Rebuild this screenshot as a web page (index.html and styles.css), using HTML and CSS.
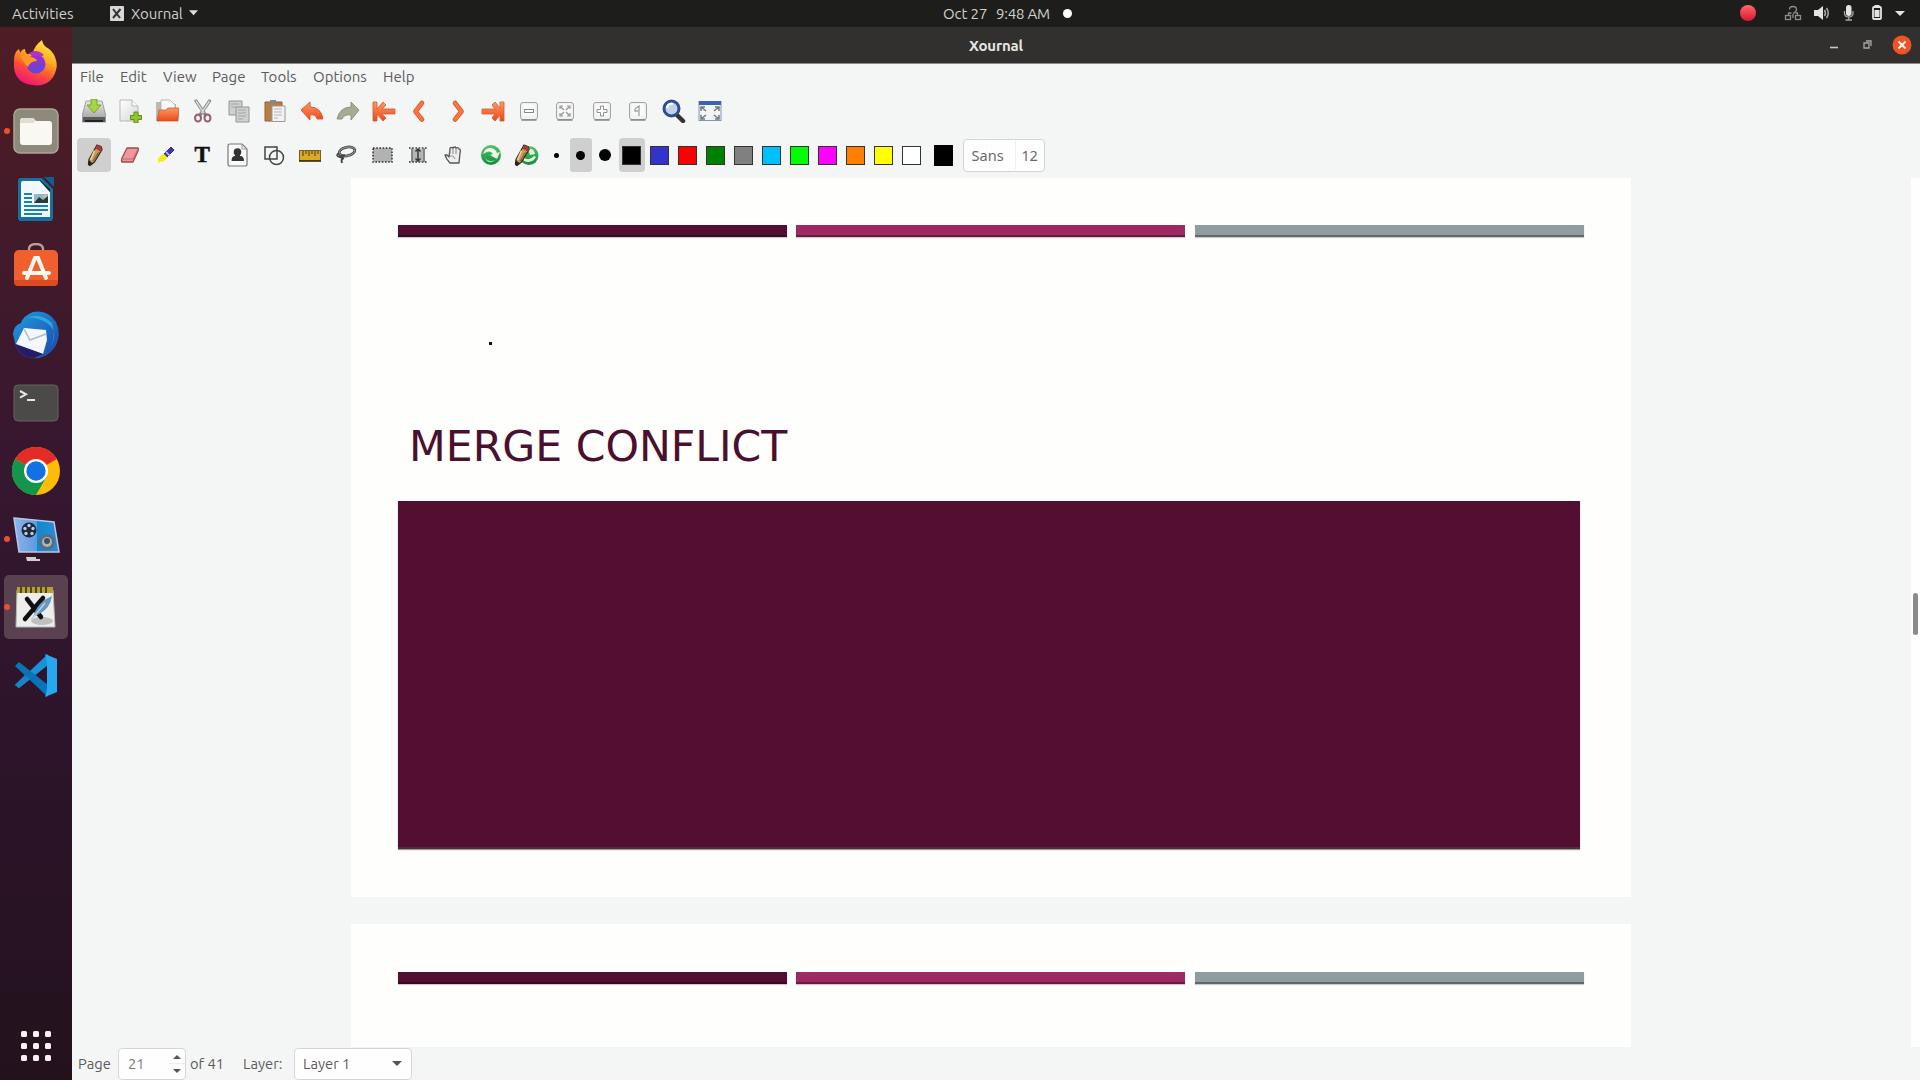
FILE: index.html
```html
<!DOCTYPE html>
<html lang="en">
<head>
<meta charset="utf-8">
<title>Xournal</title>
<link rel="stylesheet" href="styles.css">
</head>
<body>
<svg class="defs" width="0" height="0">
  <defs>
    <linearGradient id="orange" x1="0" y1="0" x2="0" y2="1"><stop offset="0" stop-color="#fb9a62"/><stop offset="1" stop-color="#ec4a1c"/></linearGradient>
    <linearGradient id="metal" x1="0" y1="0" x2="0" y2="1"><stop offset="0" stop-color="#e6e6e6"/><stop offset="1" stop-color="#9b9b9b"/></linearGradient>
    <linearGradient id="paper" x1="0" y1="0" x2="1" y2="1"><stop offset="0" stop-color="#ffffff"/><stop offset="1" stop-color="#d6d6d6"/></linearGradient>
    <linearGradient id="fox" x1=".8" y1="0" x2=".35" y2="1"><stop offset="0" stop-color="#fff04a"/><stop offset=".4" stop-color="#ffa91f"/><stop offset=".7" stop-color="#ff4b38"/><stop offset="1" stop-color="#ee1578"/></linearGradient>
    <linearGradient id="foxcore" x1="0" y1="0" x2="0" y2="1"><stop offset="0" stop-color="#a12bd6"/><stop offset="1" stop-color="#5b4ad8"/></linearGradient>
    <linearGradient id="bird" x1="0" y1="0" x2="1" y2="1"><stop offset="0" stop-color="#1f9de0"/><stop offset="1" stop-color="#1c46a8"/></linearGradient>
    <linearGradient id="screen" x1="0" y1="0" x2="1" y2="0"><stop offset="0" stop-color="#8fb4e8"/><stop offset=".5" stop-color="#5e9ae0"/><stop offset=".52" stop-color="#1287cf"/><stop offset="1" stop-color="#2a8fd6"/></linearGradient>
    <linearGradient id="recycle" x1="0" y1="0" x2="0" y2="1"><stop offset="0" stop-color="#58c46a"/><stop offset="1" stop-color="#0c8d3a"/></linearGradient>
    <g id="pencil">
      <path d="M15 2l4 1.500 1 3-7.500 12.500-4.500 3.500-1.500-1 .5-5z" fill="#c79a5b" stroke="#34261b" stroke-width="1.300" stroke-linejoin="round"/>
      <path d="M15 2l4 1.500 1 3-1.500 2.300-5.200-3.600z" fill="#a83b35"/>
      <path d="M12.500 7.500L8.500 17" stroke="#f0d29c" stroke-width="1.700"/>
      <path d="M16.500 9.500L11 18" stroke="#8a5d31" stroke-width="1.200"/>
      <path d="M7 17.500l3.500 2.500-3 2.500-1.300-.8z" fill="#222"/>
    </g>
    <g id="key">
      <rect x="3.500" y="3.500" width="17" height="17" rx="2.500" fill="#f2f2f2" stroke="#a2a2a2"/>
      <path d="M4.500 21h15" stroke="#858585" stroke-width="1.500"/>
      <rect x="6" y="5" width="12" height="11.500" rx="2" fill="#fafafa"/>
    </g>
  </defs>
</svg>

<header class="topbar">
  <div class="top-left">
    <span class="activities">Activities</span>
    <svg class="app-mark" viewBox="0 0 14 15"><rect width="14" height="15" rx="1" fill="#d8d8d8"/><path d="M3 3l7 9M10.500 3L3 12" stroke="#333" stroke-width="2"/></svg>
    <span class="app-name">Xournal</span>
    <svg class="tri" viewBox="0 0 10 6"><path d="M0 0h10L5 5.500z" fill="#dedede"/></svg>
  </div>
  <div class="clock"><span class="date">Oct 27</span><span class="time">9:48 AM</span><i class="notify"></i></div>
  <div class="tray">
    <svg width="172" height="27" viewBox="0 0 172 27">
      <defs><linearGradient id="rec" x1="0" y1="0" x2="0" y2="1"><stop offset="0" stop-color="#ff6b68"/><stop offset="1" stop-color="#d91534"/></linearGradient></defs>
      <circle cx="8" cy="13" r="8" fill="url(#rec)"/>
      <g fill="none" stroke="#8d8d8b" stroke-width="1.300"><path d="M49.500 9.500q0-3 3.500-3t3.500 3q0 2-3.500 4M53 14v4M48.500 15v-2h3M57.500 15v-2h-2"/><rect x="45.500" y="15.500" width="5" height="4"/><rect x="55.500" y="15.500" width="5" height="4"/></g>
      <path d="M74 10h4l5-4v14l-5-4h-4z" fill="#e4e4e2"/><path d="M84.500 10q2 3 0 6M86.500 8q3.500 5 0 10" fill="none" stroke="#b0b0ae" stroke-width="1.400"/>
      <rect x="106" y="5" width="5.500" height="11" rx="2.700" fill="#e4e4e2"/><path d="M104.500 11v2q0 4 4.200 4t4.300-4v-2M108.700 17v3M105.500 20h6.500" fill="none" stroke="#a5a5a3" stroke-width="1.300"/>
      <rect x="133" y="7" width="8" height="12" rx="1" fill="none" stroke="#e4e4e2" stroke-width="1.800"/><path d="M134.500 5h5v2h-5zM134.500 10h5v7h-5z" fill="#e4e4e2"/>
      <path d="M155 11h10l-5 5z" fill="#e4e4e2"/>
    </svg>
  </div>
</header>

<div class="desktop">
  <nav class="dock">
    <div class="launcher"><svg viewBox="0 0 48 48"><path d="M2 21q0-8 5-11 1 2 1 4 2-4 5-4 0 3 2 5 4 0 6-1 1-7 9-13 1 5 4 7 6 3 9 10 3 8 1 13-4 15-19 15.500Q4 46 2 29z" fill="url(#fox)"/><circle cx="24" cy="25" r="9.500" fill="url(#foxcore)"/><path d="M9 17q6-2 13 2 3 1 3 3-7 0-9 6-6-6-7-11z" fill="#ff9922"/><path d="M17 14q8-5 15 2l-4 2q-3-3-8-1z" fill="#b232c8"/></svg></div>
    <div class="launcher running"><svg viewBox="0 0 48 48"><rect x="2" y="2" width="44" height="44" rx="6" fill="#8e8a7b" stroke="#aaa596" stroke-width="1.500"/><path d="M8 14q0-3 3-3h10l3 3h13q3 0 3 3v18q0 3-3 3H11q-3 0-3-3z" fill="#faf8f3"/><path d="M8 16v-2q0-3 3-3h10l3 3-3 2z" fill="#e2ddd1"/></svg></div>
    <div class="launcher"><svg viewBox="0 0 48 48"><path d="M9 3h21l11 11v29q0 3-3 3H9q-3 0-3-3V6q0-3 3-3z" fill="#16719f"/><path d="M32 2h10v10z" fill="#0c6191"/><path d="M11 6h17l10 11v25H9V8q0-2 2-2z" fill="#f2f9fc"/><path d="M28 5v1l10 11V14z" fill="#122c42"/><g stroke="#1783b0" stroke-width="1.800"><path d="M12 19h8M12 23h8M12 27h8M12 31h24M12 35h24M12 39h18"/></g><rect x="22" y="19" width="14" height="9" fill="#8fb8ce"/><path d="M22 28l5-6 4 3 5-4v7z" fill="#283a35"/><circle cx="33" cy="21" r="1.500" fill="#edc14f"/></svg></div>
    <div class="launcher"><svg viewBox="0 0 48 48"><path d="M17 9V6q0-5 7-5t7 5v3" fill="none" stroke="#bba194" stroke-width="2.300"/><rect x="2" y="7" width="44" height="36" rx="5" fill="#f0602f"/><path d="M2 37h44v2q0 4-4 4H6q-4 0-4-4z" fill="#dc4b22"/><path d="M15 35L23 15h3l8 20M12 30h25" fill="none" stroke="#fff6ed" stroke-width="4" stroke-linecap="round"/></svg></div>
    <div class="launcher"><svg viewBox="0 0 48 48"><path d="M21 1q15-3 23 10 6 13-1 25-9 13-24 11Q5 44 3 32L1 23q1-9 8-11 2-7 12-11z" fill="url(#bird)"/><path d="M15 7q14-6 25 5 5 16-4 27 13-17-1-27-9-6-20-5z" fill="#3abbe8" opacity=".7"/><path d="M4 33l8-16 22 2 1 10-4 14z" fill="#f4f7fb"/><path d="M12 18l6 11 16-6" fill="none" stroke="#acbac9" stroke-width="1.500"/><path d="M3 33l28 10-9 4Q7 46 3 33z" fill="#271b65"/></svg></div>
    <div class="launcher"><svg viewBox="0 0 48 48"><rect x="2" y="6" width="44" height="36" rx="4" fill="#4b4a49" stroke="#656361"/><path d="M8 12l6 3.300-6 3.300M15 21h8" fill="none" stroke="#e6e6e6" stroke-width="2"/></svg></div>
    <div class="launcher"><svg viewBox="0 0 48 48"><circle cx="24" cy="24" r="24" fill="#fbbd07"/><path d="M24 24L3.200 12A24 24 0 0 1 44.800 12z" fill="#e32b27"/><path d="M3.200 12A24 24 0 0 0 24 48l10.400-18L24 24z" fill="#13954b"/><path d="M24 12h20.800L40 12H24z" fill="#e32b27"/><circle cx="24" cy="24" r="12" fill="#fff"/><circle cx="24" cy="24" r="9.700" fill="#1272e3"/></svg></div>
    <div class="launcher running"><svg viewBox="0 0 48 48"><path d="M2 3l40 4 5 30-40 0z" fill="url(#screen)" stroke="#b9c7e4" stroke-width="1.500"/><circle cx="17" cy="15" r="7.500" fill="#1d2938"/><g fill="#b9cde2"><circle cx="17" cy="10.500" r="1.700"/><circle cx="21" cy="13.500" r="1.700"/><circle cx="20" cy="18.500" r="1.700"/><circle cx="14" cy="18.500" r="1.700"/><circle cx="13" cy="13.500" r="1.700"/></g><circle cx="35" cy="27" r="8" fill="#5b6c7c"/><circle cx="35" cy="27" r="5" fill="#a7b7c1"/><circle cx="35" cy="26" r="3" fill="#415161"/><path d="M14 42h10v2h4v2H15z" fill="#ced0d2"/></svg></div>
    <div class="launcher running selected"><svg viewBox="0 0 48 48"><path d="M5 7h36l2 37H4z" fill="#edeeec" stroke="#b7b6b1"/><ellipse cx="30" cy="38" rx="11" ry="4" fill="#bfbfbe"/><path d="M5 4h36v6H5z" fill="#b6a02e"/><path d="M9 3v7M14 3v7M19 3v7M24 3v7M29 3v7M34 3v7" stroke="#4c4624" stroke-width="2"/><path d="M15 16l14 18M31 15L13 36" stroke="#101112" stroke-width="4.500" stroke-linecap="round"/><path d="M21 34q4-15 19-21-2 13-13 18z" fill="#6998bd"/><path d="M19 37l14-17" stroke="#bad2e6" stroke-width="1.500"/></svg></div>
    <div class="launcher"><svg viewBox="0 0 48 48"><path d="M3 34l4 3 29-23V3z" fill="#1b91d8"/><path d="M3 15l4-4 29 23v12z" fill="#0874b8"/><path d="M33 3l12 5v33l-12 5 2-8V12z" fill="#25a8f1"/><path d="M3 34l4 3 11-9-5-4z" fill="#1686cb"/></svg></div>
    <svg class="apps" viewBox="0 0 30 30" fill="#fbf0f5"><rect x="0" y="0" width="6" height="6" rx="1.500"/><rect x="12" y="0" width="6" height="6" rx="1.500"/><rect x="24" y="0" width="6" height="6" rx="1.500"/><rect x="0" y="12" width="6" height="6" rx="1.500"/><rect x="12" y="12" width="6" height="6" rx="1.500"/><rect x="24" y="12" width="6" height="6" rx="1.500"/><rect x="0" y="24" width="6" height="6" rx="1.500"/><rect x="12" y="24" width="6" height="6" rx="1.500"/><rect x="24" y="24" width="6" height="6" rx="1.500"/></svg>
  </nav>

  <main class="window">
    <div class="titlebar">
      <span class="title">Xournal</span>
      <svg class="controls" width="94" height="36" viewBox="0 0 94 36"><path d="M4 20.500h8" stroke="#c9c8c5" stroke-width="1.600"/><path d="M38 16h5v5h-5zM40 14h5v5" fill="none" stroke="#aaa9a6" stroke-width="1.300"/><circle cx="76" cy="18" r="9.500" fill="#ee5426"/><path d="M72.500 14.500l7 7M79.500 14.500l-7 7" stroke="#fff" stroke-width="1.800"/></svg>
    </div>
    <div class="menubar"><span>File</span><span>Edit</span><span>View</span><span>Page</span><span>Tools</span><span>Options</span><span>Help</span></div>

    <div class="toolbar main-tools">
      <div class="tool"><svg viewBox="0 0 24 24"><path d="M4 2h16l4 15v6H0v-6z" fill="url(#metal)" stroke="#858585" stroke-width=".7"/><path d="M1 18h22v5H1z" fill="#5b5b5b"/><path d="M3 22h18" stroke="#222" stroke-width="2"/><path d="M9 0h6v6h4l-7 8-7-8h4z" fill="#a4d83a" stroke="#669a24" stroke-width=".8"/></svg></div>
      <div class="tool"><svg viewBox="0 0 24 24"><path d="M2 1h12l6 6v15H2z" fill="url(#paper)" stroke="#b1b1b1" stroke-width=".9"/><path d="M14 1v6h6" fill="#f9f9f9" stroke="#b9b9b9"/><path d="M16 13h4v3.500h3.500v4H20V24h-4v-3.500h-3.500v-4H16z" fill="#92c72b" stroke="#5a8d1b"/></svg></div>
      <div class="tool"><svg viewBox="0 0 24 24"><path d="M1 3h9l2 2h9v17H1z" fill="#bdb8b4"/><path d="M6 1h9l5 5v9H6z" fill="#f9f9f9" stroke="#b5b5b5"/><path d="M2 22L4 11h7l2-2h11l-1 13z" fill="url(#orange)" stroke="#cf4b25" stroke-width=".7"/></svg></div>
      <div class="tool"><svg viewBox="0 0 24 24"><path d="M5 2l9.500 14M18.500 2L9 16" stroke="#8a8a8a" stroke-width="3.200" stroke-linecap="round"/><path d="M5 2l8 12M18.500 2L10.500 14" stroke="#dadada" stroke-width="1.400"/><ellipse cx="7" cy="19" rx="3" ry="3.500" fill="none" stroke="#96606f" stroke-width="2"/><ellipse cx="16.500" cy="19" rx="3" ry="3.500" fill="none" stroke="#96606f" stroke-width="2"/></svg></div>
      <div class="tool"><svg viewBox="0 0 24 24"><g fill="#cfcfcf" stroke="#949494"><path d="M2 2h13v14H2z"/><path d="M9 8h13v15H9z"/></g><path d="M4 5h8M4 8h5M11 11h8M11 14h8M11 17h8M11 20h5" stroke="#a5a5a5"/></svg></div>
      <div class="tool"><svg viewBox="0 0 24 24"><path d="M2 3h17v19H2z" fill="#b77d42" stroke="#8b6137"/><path d="M7 1h6v4H7z" fill="#888"/><path d="M9 7h13v15.500H9z" fill="#f3f3f3" stroke="#999"/><path d="M11 10h8M11 13h8M11 16h8M11 19h4" stroke="#b5b5b5"/></svg></div>
      <div class="tool"><svg viewBox="0 0 24 24"><path d="M1 11l9-8v5q11 0 13 12h-6q-1-5-7-4v5z" fill="url(#orange)" stroke="#db552e" stroke-width=".9" stroke-linejoin="round"/></svg></div>
      <div class="tool"><svg viewBox="0 0 24 24"><path d="M23 11l-8-8v5Q4 8 1 20h5q2-5 9-4v5z" fill="#a4ad93" stroke="#858f78" stroke-width=".9" stroke-linejoin="round"/></svg></div>
      <div class="tool"><svg viewBox="0 0 24 24"><path d="M1 3h4v7l6-7 3 3-4 4h13v5H10l4 4-3 3-6-7v7H1z" fill="url(#orange)" stroke="#db552e" stroke-width=".8" stroke-linejoin="round"/></svg></div>
      <div class="tool"><svg viewBox="0 0 24 24"><path d="M14 4L7.500 12.500l6.500 8" fill="none" stroke="#dc5328" stroke-width="4.600" stroke-linecap="round" stroke-linejoin="round"/><path d="M14 4L7.500 12.500l6.500 8" fill="none" stroke="#f6773f" stroke-width="3" stroke-linecap="round" stroke-linejoin="round"/></svg></div>
      <div class="tool"><svg viewBox="0 0 24 24"><path d="M10 4l6.500 8.500L10 20.500" fill="none" stroke="#dc5328" stroke-width="4.600" stroke-linecap="round" stroke-linejoin="round"/><path d="M10 4l6.500 8.500L10 20.500" fill="none" stroke="#f6773f" stroke-width="3" stroke-linecap="round" stroke-linejoin="round"/></svg></div>
      <div class="tool"><svg viewBox="0 0 24 24"><path d="M23 3h-4v6l-5-6-3 3 3 4H1v5h13l-3 4 3 3 5-6v6h4z" fill="url(#orange)" stroke="#db552e" stroke-width=".8" stroke-linejoin="round"/></svg></div>
      <div class="tool"><svg viewBox="0 0 24 24"><use href="#key"/><rect x="7.500" y="10.500" width="9" height="3" fill="#fff" stroke="#888"/></svg></div>
      <div class="tool"><svg viewBox="0 0 24 24"><use href="#key"/><path d="M7 10V7h3M14 7h3v3M17 14v3h-3M10 17H7v-3M8 8l3 3M16 8l-3 3M16 16l-3-3M8 16l3-3" fill="none" stroke="#949494" stroke-width="1.200"/></svg></div>
      <div class="tool"><svg viewBox="0 0 24 24"><use href="#key"/><path d="M10.500 7h3v3.500H17v3h-3.500V17h-3v-3.500H7v-3h3.500z" fill="#fff" stroke="#909090"/></svg></div>
      <div class="tool"><svg viewBox="0 0 24 24"><use href="#key"/><path d="M9 10l4-3v10M9 10v2h3" fill="none" stroke="#a0a0a0" stroke-width="1.300"/></svg></div>
      <div class="tool"><svg viewBox="0 0 24 24"><path d="M15 16l6 6" stroke="#343435" stroke-width="4.500" stroke-linecap="round"/><circle cx="9.500" cy="9.500" r="7.500" fill="#c3d2e8" stroke="#2f4d92" stroke-width="3"/><path d="M5 9q1-5 6-4" fill="none" stroke="#fff" stroke-width="2"/></svg></div>
      <div class="tool"><svg viewBox="0 0 24 24"><rect x="1" y="2.500" width="22" height="19" fill="#f1f5f7" stroke="#8094bd"/><path d="M1 2h22v4H1z" fill="#3b63b1"/><path d="M3 12V8h4M17 8h4v4M21 16v4h-4M7 20H3v-4M3 8l5 4M21 8l-5 4M21 20l-5-4M3 20l5-4" fill="none" stroke="#777" stroke-width="1.500"/></svg></div>
    </div>

    <div class="toolbar pen-tools">
      <div class="tool active"><svg viewBox="0 0 24 24"><use href="#pencil"/></svg></div>
      <div class="tool"><svg viewBox="0 0 24 24"><path d="M9 5h11q1 1 0 3l-5 11H4q-1-1 0-4z" fill="#ee989c" stroke="#9b4c50" stroke-width="1.300" stroke-linejoin="round"/><path d="M4 16h11l5-10" fill="none" stroke="#c6676d"/></svg></div>
      <div class="tool"><svg viewBox="0 0 24 24"><path d="M17 4l3 3-9 9-3-3z" fill="#3936bb" stroke="#302e6e"/><path d="M9.500 10.500l4 4-4 4H6l-2 2v-5z" fill="#f3ec19"/><path d="M12 9l4 4" stroke="#d3d3df" stroke-width="1.500"/></svg></div>
      <div class="tool text-tool">T</div>
      <div class="tool"><svg viewBox="0 0 24 24"><path d="M4 1h12l5 5v15q0 2-2 2H4q-2 0-2-2V3q0-2 2-2z" fill="#fafafa" stroke="#777" stroke-width="1.200"/><path d="M16 1v5h5" fill="none" stroke="#999"/><circle cx="11.500" cy="9" r="3.800" fill="#343434"/><path d="M9 11h5v2q4 0 4 5H5.500q0-5 3.500-5z" fill="#343434"/></svg></div>
      <div class="tool"><svg viewBox="0 0 24 24"><g fill="none" stroke="#444" stroke-width="1.500"><path d="M3 4h12v12H3z"/><circle cx="14.500" cy="14.500" r="7"/></g></svg></div>
      <div class="tool"><svg viewBox="0 0 24 24"><rect x="1.500" y="7.500" width="21" height="10" fill="#d9ab24" stroke="#806018"/><path d="M1 18h22" stroke="#423313" stroke-width="1.700"/><path d="M5 8v5M8 8v3M11 8v5M14 8v3M17 8v5M20 8v3" stroke="#453716"/></svg></div>
      <div class="tool"><svg viewBox="0 0 24 24"><ellipse cx="13" cy="8.500" rx="8" ry="4.300" transform="rotate(-12 13 8.500)" fill="none" stroke="#4b4b4b" stroke-width="2.800"/><ellipse cx="13" cy="8.500" rx="8" ry="4.300" transform="rotate(-12 13 8.500)" fill="none" stroke="#aaa" stroke-width=".8"/><path d="M5 10q-4 3 1 4t2 2q-1 1 0 4M6 14l5-2" fill="none" stroke="#454545" stroke-width="2"/></svg></div>
      <div class="tool"><svg viewBox="0 0 24 24"><rect x="3" y="5" width="19" height="14" fill="#b2b2b2" stroke="#333" stroke-width="1.500" stroke-dasharray="1.600 1.600"/></svg></div>
      <div class="tool"><svg viewBox="0 0 24 24"><rect x="5" y="6" width="14" height="13" fill="#b5b5b5"/><path d="M3 5h19M3 19h19" stroke="#333" stroke-width="1.500" stroke-dasharray="1.600 1.600"/><path d="M6 5v14M18 5v14" stroke="#666" stroke-width="1.200"/><path d="M12 6v12M9.500 8.500l2.500-2.500 2.500 2.500M9.500 15.500l2.500 2.500 2.500-2.500" fill="none" stroke="#333" stroke-width="1.400"/></svg></div>
      <div class="tool"><svg viewBox="0 0 24 24"><path d="M8 20q-4-4-5-8 2-1 4 2l1-9q2-1 3 0 2-2 3 0 2-1 3 1 2 0 1 4l-1 10z" fill="#eee" stroke="#555" stroke-width="1.300" stroke-linejoin="round"/><path d="M8 6v5M11 5v6M14 5v6M7 14q4-3 6 2" fill="none" stroke="#888"/></svg></div>
      <div class="tool"><svg viewBox="0 0 24 24"><circle cx="12" cy="12" r="10" fill="url(#recycle)"/><path d="M4 11q2-7 8-6 5 1 6 5l3-1-3 7-7-4 3-1q-3-5-10 0z" fill="#e9f8e8"/><path d="M6 15q4 5 10 2-4 4-8 1z" fill="#b1dfb5"/></svg></div>
      <div class="tool"><svg class="wide" viewBox="0 0 26 24"><circle cx="15" cy="12.500" r="9.500" fill="url(#recycle)"/><path d="M9 14q6 5 11-1l2 1q-4 7-12 4z" fill="#e9f8e8"/><path d="M14 6q6-1 7 5l-5 1z" fill="#dff1dd"/><use href="#pencil" transform="translate(-5 0)"/></svg></div>
      <div class="pens"><i class="pen fine"></i><i class="pen medium chosen"></i><i class="pen thick"></i></div>
      <div class="swatches">
        <i class="swatch black chosen"></i><i class="swatch blue"></i><i class="swatch red"></i><i class="swatch green"></i><i class="swatch gray"></i><i class="swatch sky"></i><i class="swatch lime"></i><i class="swatch magenta"></i><i class="swatch tangerine"></i><i class="swatch yellow"></i><i class="swatch white"></i>
      </div>
      <i class="current-color"></i>
      <div class="font-button"><span class="font-name">Sans</span><span class="font-size">12</span></div>
    </div>

    <div class="viewport">
      <div class="pages">
        <section class="slide first">
          <div class="bars"><i class="bar plum"></i><i class="bar pink"></i><i class="bar slate"></i></div>
          <i class="stroke"></i>
          <h1>MERGE CONFLICT</h1>
          <div class="panel"></div>
        </section>
        <section class="slide second">
          <div class="bars"><i class="bar plum"></i><i class="bar pink"></i><i class="bar slate"></i></div>
        </section>
      </div>
      <div class="scroll"><i class="thumb"></i></div>
    </div>

    <footer class="status">
      <span class="page-label">Page</span>
      <div class="spin"><span>21</span><svg width="16" height="30" viewBox="0 0 16 30"><path d="M0 14.500h16" stroke="#eee"/><path d="M4 10h8l-4-4zM4 20h8l-4 4z" fill="#555"/></svg></div>
      <span class="total">of 41</span>
      <span class="layer-label">Layer:</span>
      <div class="combo"><span>Layer 1</span><svg width="10" height="6" viewBox="0 0 10 6"><path d="M0 0h10L5 5z" fill="#555"/></svg></div>
    </footer>
  </main>
</div>
</body>
</html>
```
FILE: styles.css
```css
* { box-sizing: border-box; }
body { margin: 0; width: 1920px; height: 1080px; overflow: hidden; display: flex; flex-direction: column; font-family: Ubuntu, "Noto Sans", sans-serif; font-size: 15px; color: #5b5b5b; background: #f4f5f5; }
.defs { position: absolute; }
svg { display: block; flex: none; }
i { display: block; flex: none; }
span { white-space: nowrap; }

.topbar { height: 27px; flex: none; background: #1d1d1b; color: #d2d1ce; display: grid; grid-template-columns: 943px 1fr 180px; align-items: center; line-height: 25px; }
.top-left, .clock { padding-bottom: 1px; }
.top-left { display: flex; align-items: center; padding-left: 12px; }
.activities { width: 98px; }
.app-mark { width: 14px; height: 15px; margin-right: 7px; }
.app-name { width: 58px; letter-spacing: -.1px; }
.tri { width: 9px; height: 6px; }
.clock { display: flex; align-items: center; letter-spacing: -.1px; }
.date { width: 53px; }
.time { width: 67px; letter-spacing: -.2px; }
.notify { width: 9px; height: 9px; border-radius: 50%; background: #fff; }

.desktop { display: flex; flex: 1; min-height: 0; }
.dock { width: 72px; flex: none; background: linear-gradient(#4f1d24, #431a2a 20%, #351730 43%, #2e142b 65%, #23121d); display: flex; flex-direction: column; align-items: center; padding-top: 4px; }
.launcher { width: 64px; height: 64px; margin-bottom: 4px; flex: none; position: relative; display: flex; align-items: center; justify-content: center; border-radius: 5px; }
.launcher svg { width: 48px; height: 48px; }
.launcher.selected { background: #59414f; }
.running::before { content: ""; position: absolute; left: 0; top: 29px; width: 6px; height: 6px; border-radius: 50%; background: #ed4f2d; }
.apps { width: 30px; height: 30px; margin: auto 0 19px; }

.window { width: 1848px; display: flex; flex-direction: column; }
.titlebar { height: 37px; flex: none; background: #32302f; border-bottom: 1px solid #8a8988; display: grid; grid-template-columns: 1fr 94px; align-items: center; }
.title { grid-column: 1 / 3; grid-row: 1; text-align: center; color: #e7e5e2; font-weight: 700; letter-spacing: -.15px; }
.controls { grid-column: 2; grid-row: 1; width: 94px; }
.menubar { height: 25px; flex: none; display: grid; grid-template-columns: 40px 43px 49px 49px 52px 70px 50px; padding: 0 0 1px 8px; align-items: center; }
.toolbar { display: flex; align-items: center; padding-left: 4px; flex: none; }
.main-tools { height: 44px; }
.pen-tools { height: 45px; padding-bottom: 1px; }
.tool { width: 36.250px; height: 34px; flex: none; display: flex; align-items: center; justify-content: center; }
.pen-tools .tool { width: 36.050px; }
.tool svg { width: 24px; height: 24px; }
.tool svg.wide { width: 26px; }
.pen-tools .tool.active { background: #cfcfcf; width: 34px; margin: 0 1.050px 0 1px; border-radius: 4px; }
.text-tool { font: 700 23px "Liberation Serif", serif; color: #111; -webkit-text-stroke: .5px #111; }
.pens { display: flex; align-items: center; }
.pen { height: 34px; width: 24px; display: flex; align-items: center; justify-content: center; border-radius: 3px; }
.pen::before { content: ""; width: 5px; height: 5px; border-radius: 50%; background: #000; }
.pen.medium::before { width: 9px; height: 9px; }
.pen.thick::before { width: 12px; height: 12px; }
.pen.medium { width: 22px; margin: 0 1px; }
.chosen { background: #cfcfcf; }
.swatches { display: flex; margin-left: 2px; }
.swatch { width: 28px; height: 34px; display: flex; align-items: center; justify-content: center; border-radius: 4px; }
.swatch::before { content: ""; width: 17px; height: 17px; border: 1px solid #333; background: var(--ink); }
.black { --ink: #000; width: 26px; margin-right: 1px; }
.blue { --ink: #3333cc; }
.red { --ink: #ff0000; }
.green { --ink: #008000; }
.gray { --ink: #808080; }
.sky { --ink: #00c0ff; }
.lime { --ink: #00ff00; }
.magenta { --ink: #ff00ff; }
.tangerine { --ink: #ff8000; }
.yellow { --ink: #ffff00; }
.white { --ink: #ffffff; }
.current-color { width: 19px; height: 21px; background: #000; margin-left: 8px; }
.font-button { width: 82px; height: 33px; margin-left: 10px; background: #fefefe; border: 1px solid #d5d5d4; border-radius: 4px; display: flex; align-items: center; font-family: "Noto Sans", sans-serif; font-size: 14.500px; color: #696969; }
.font-name { width: 52px; padding-left: 8px; border-right: 1px solid #eee; line-height: 28px; }
.font-size { padding-left: 6px; letter-spacing: -.5px; }

.viewport { height: 869px; display: flex; flex: none; overflow: hidden; }
.pages { width: 1839px; padding-left: 279px; display: flex; flex-direction: column; gap: 27px; overflow: hidden; }
.slide { width: 1280px; flex: none; background: #fefefd; padding: 47px 46px 0 46.700px; }
.first { height: 719px; }
.second { height: 123px; padding-top: 48px; }
.bars { display: grid; grid-template-columns: 389px 389px 389px; gap: 9.500px; height: 12px; }
.bar { border-bottom: 2px solid #00000055; background-clip: border-box; box-shadow: 0 1px 1px #0003; }
.plum { background-color: #530f32; }
.pink { background-color: #9e2a62; }
.slate { background-color: #8f9ca0; }
.stroke { width: 3px; height: 3px; background: #111; margin: 105px 0 0 91px; }
h1 { margin: 76px 0 0 11.300px; height: 50px; font: 400 42.600px/50px "DejaVu Sans", sans-serif; color: #4b102f; white-space: nowrap; }
.panel { width: 1182px; height: 348px; margin-top: 30px; background: #530f32; border-bottom: 2px solid #4b2f3c; box-shadow: 0 1px 1px #0006; }
.scroll { width: 9px; background: #fefefe; padding: 415px 0 0 2px; }
.thumb { width: 5px; height: 42px; border-radius: 3px; background: #8b8b89; }
.status { height: 33px; display: flex; align-items: center; padding-left: 6px; line-height: 32px; font-size: 14.700px; }
.page-label { width: 40px; }
.spin { width: 68px; height: 32px; background: #fefefe; border: 1px solid #d5d5d4; border-radius: 4px; display: flex; align-items: center; justify-content: space-between; padding-left: 9px; color: #777; }
.total { width: 53px; margin-left: 4px; }
.layer-label { width: 51px; }
.combo { width: 118px; height: 32px; background: #fefefe; border: 1px solid #d5d5d4; border-radius: 4px; display: flex; align-items: center; justify-content: space-between; padding: 0 9px 0 8px; }
```
